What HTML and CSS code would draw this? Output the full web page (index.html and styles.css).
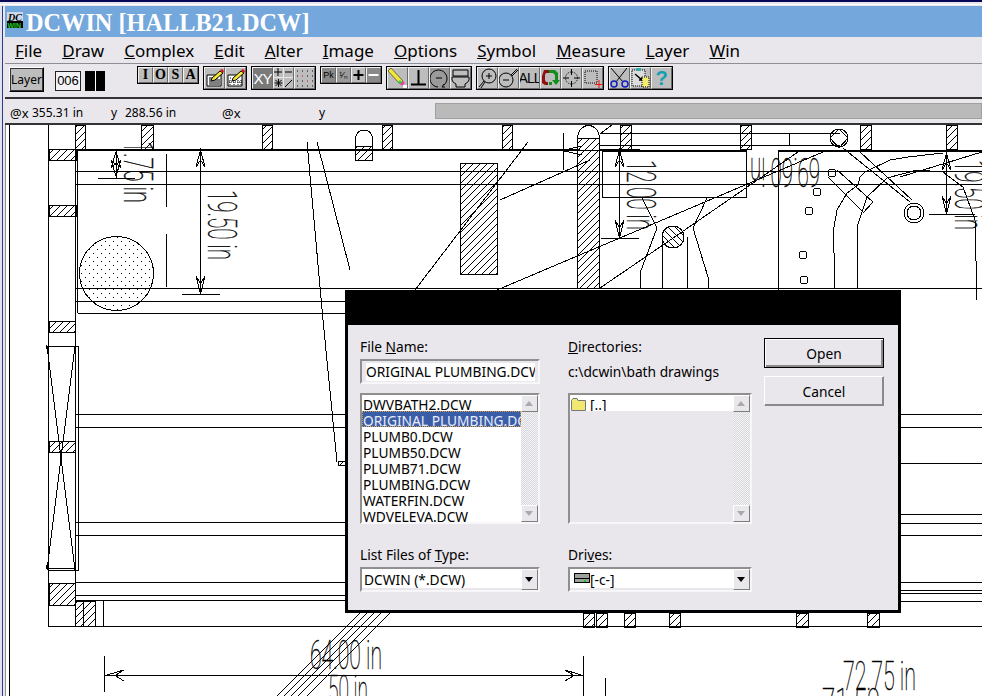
FILE: index.html
```html
<!DOCTYPE html>
<html lang="en">
<head>
<meta charset="utf-8">
<title>DCWIN [HALLB21.DCW]</title>
<link rel="stylesheet" href="styles.css">
</head>
<body>
<div class="app">
  <div class="topedge"></div>
  <div class="main">
    <div class="title">
      <svg class="appicon" viewBox="0 0 16 16" width="16" height="16"><rect width="16" height="16" fill="#cfd8e8"/><rect y="9" width="16" height="7" fill="#000"/><text x="1" y="9" class="ico-dc">DC</text><text x="0.5" y="15.500" class="ico-win">WIN</text></svg>
      <span>DCWIN [HALLB21.DCW]</span>
    </div>
    <nav class="menu">
      <span><u>F</u>ile</span><span><u>D</u>raw</span><span><u>C</u>omplex</span><span><u>E</u>dit</span><span><u>A</u>lter</span><span><u>I</u>mage</span><span><u>O</u>ptions</span><span><u>S</u>ymbol</span><span><u>M</u>easure</span><span><u>L</u>ayer</span><span><u>W</u>in</span>
    </nav>
    <div class="toolbar">
      <button class="layer">Layer</button>
      <div class="laybox">006</div>
      <div class="swatch"><i></i></div>
      <div class="grp mini iosa"><b>I</b><b>O</b><b>S</b><b>A</b></div>
      <div class="grp">
        <div class="tb"><svg viewBox="0 0 21 22"><path class="w" d="M3 8h14v11H3z"/><path class="k" d="M5 11h9M5 13h11M5 15h11M5 17h11"/><path class="yb" d="M8 11l8-7 3 2-8 7-4 1z"/><path class="r" d="M16 3l3 3 1-2-2-2z"/></svg></div>
        <div class="tb"><svg viewBox="0 0 21 22"><path class="w" d="M3 8h14v11H3z"/><path class="kd" d="M5 11h1M9 11h1M5 13v5M9 13v5M13 13v5M16 13v5M4 15h13"/><path class="yb" d="M8 11l8-7 3 2-8 7-4 1z"/><path class="r" d="M16 3l3 3 1-2-2-2z"/></svg></div>
      </div>
      <div class="grp">
        <div class="tb dark xy">XY</div>
        <div class="tb"><svg viewBox="0 0 21 22"><path class="k" d="M5 1v8M1 5h8M12 5h7M1.500 16h8M5.500 12v8M2.500 13l6 6M8.500 13l-6 6M12 20l7-7"/><path class="wl" d="M10.500 0v22M0 10.500h21"/></svg></div>
        <div class="tb"><svg viewBox="0 0 21 22"><path class="kd2" d="M3 4h1M8 4h1M13 4h1M18 4h1M3 9h1M13 9h1M18 9h1M3 14h1M8 14h1M18 14h1M3 19h1M8 19h1M13 19h1M18 19h1"/><path class="rd" d="M8 9h1M13 14h1"/></svg></div>
      </div>
      <div class="grp mini">
        <div class="tb dark2 pk">Pk</div>
        <div class="tb dark3 pk">¹⁄ₙ</div>
        <div class="tb sign"><svg viewBox="0 0 15 16"><path class="kb" d="M7.500 3v10M2.500 8h10"/></svg></div>
        <div class="tb dark2 sign"><svg viewBox="0 0 15 16"><path class="wb" d="M2.500 8h10"/></svg></div>
      </div>
      <div class="grp">
        <div class="tb"><svg viewBox="0 0 21 22"><path d="M1 4l3-3 12 13-3 3z" class="y"/><path d="M13 17l3-3 2 2-3 3z" class="pk1"/><path d="M11 15l2-2 2 2-2 2z" class="gn"/><rect x="16" y="18" width="5" height="3" fill="#fff"/></svg></div>
        <div class="tb"><svg viewBox="0 0 21 22"><path class="kb" d="M10.500 3v14M3 17.500h15"/></svg></div>
        <div class="tb dark3"><svg viewBox="0 0 21 22"><path class="k" d="M9 20a8.500 8.500 0 1 1 6-2M7 11h6M15 17l-2 3 3 0"/></svg></div>
        <div class="tb"><svg viewBox="0 0 21 22"><path class="k" d="M3 3h15v6H3zM2 10h17v3a8 6 0 0 1-4 4v3H6v-3a8 6 0 0 1-4-4z"/></svg></div>
      </div>
      <div class="grp">
        <div class="tb"><svg viewBox="0 0 21 22"><circle class="k" cx="12" cy="9" r="7"/><path class="k" d="M9 9h6M12 6v6M7 14l-5 6M8 15l-4 6"/></svg></div>
        <div class="tb"><svg viewBox="0 0 21 22"><circle class="k" cx="8" cy="13" r="7"/><path class="k" d="M5 13h6M13 8l6-6M14 9l6-6"/></svg></div>
        <div class="tb allb">ALL</div>
        <div class="tb"><svg viewBox="0 0 21 22"><path class="red" d="M9 3H4L2 9v7l3 2h3v-3H6l-1-2V8l1-2h3z"/><path class="grn" d="M9 3h6l3 3v7l2 0-4 5-4-5h3V8l-2-2H9zM9 15h3v3H9z"/></svg></div>
        <div class="tb"><svg viewBox="0 0 21 22"><circle class="kdash" cx="10.500" cy="11" r="6"/><path class="k" d="M10.500 2v6M10.500 14v6M2 11h6M13 11h6"/></svg></div>
        <div class="tb"><svg viewBox="0 0 21 22"><path class="kdash" d="M3 4h12v12H3z"/><path class="rl" d="M13 17.500h8M17 13v8"/></svg></div>
      </div>
      <div class="grp">
        <div class="tb"><svg viewBox="0 0 21 22"><path class="k" d="M2 1l12 14M18 1L7 15"/><circle class="bl" cx="5" cy="17" r="3"/><circle class="bl" cx="16" cy="17" r="3"/></svg></div>
        <div class="tb"><svg viewBox="0 0 21 22"><rect x="2" y="3" width="13" height="16" class="w2"/><rect x="6" y="1" width="5" height="3" fill="#3aa"/><path class="kb2" d="M5 7l7 6M9 13h3v-3"/><rect x="12" y="10" width="7" height="10" class="yy"/></svg></div>
        <div class="tb q">?</div>
      </div>
    </div>
    <div class="status">
      <span class="s1">@x</span><span class="s2">355.31 in</span><span class="s3">y</span><span class="s4">288.56 in</span><span class="s5">@x</span><span class="s6">y</span><div class="sbar"></div>
    </div>
    <div class="canvas">
      <svg class="drawing" viewBox="5 125 977 571" width="977" height="571">
        <defs>
          <pattern id="h" width="7" height="7" patternUnits="userSpaceOnUse"><path d="M0 7L7 0" stroke="#000" stroke-width="1"/></pattern>
          <pattern id="hb" width="7" height="7" patternUnits="userSpaceOnUse"><path d="M0 0L7 7" stroke="#000" stroke-width="1"/></pattern>
          <pattern id="d" width="8" height="8" patternUnits="userSpaceOnUse"><rect x="1" y="1" width="1" height="1"/><rect x="5" y="5" width="1" height="1"/></pattern>
        </defs>
        <g class="hatch">
          <rect x="75.500" y="125" width="10" height="24"/><rect x="141.500" y="125" width="12" height="24"/><rect x="262.500" y="125" width="10" height="24"/><rect x="382.500" y="125" width="10" height="24"/><rect x="502.500" y="125" width="10" height="24"/><rect x="620.500" y="125" width="11" height="24"/><rect x="740.500" y="125" width="11" height="24"/><rect x="860.500" y="125" width="11" height="24"/><rect x="946.500" y="125" width="11" height="24"/>
          <rect x="49.500" y="149.500" width="27" height="11"/><rect x="49.500" y="205.500" width="27" height="11"/><rect x="49.500" y="321.500" width="26" height="11"/><rect x="49.500" y="441.500" width="26" height="11"/><rect x="49.500" y="583.500" width="26" height="22"/>
          <rect x="75.500" y="601.500" width="8" height="25"/><rect x="83.500" y="601.500" width="12" height="25"/>
          <rect x="460.500" y="163.500" width="37" height="111"/>
          <rect x="577.500" y="138.500" width="22" height="150"/>
          <rect x="583.500" y="613" width="11" height="14"/><rect x="596.500" y="613" width="11" height="14"/><rect x="624.500" y="613" width="11" height="14"/><rect x="669.500" y="613" width="11" height="14"/><rect x="796.500" y="613" width="12" height="14"/><rect x="867.500" y="613" width="12" height="14"/>
          <rect x="338.500" y="461.500" width="7" height="4"/>
          <rect x="355.500" y="146.500" width="17" height="14"/>
        </g>
        <circle class="dots" cx="116.500" cy="273.500" r="37"/>
        <circle class="hb" cx="673" cy="237" r="11"/>
        <path class="ln" d="M9.500 125V696M48.500 125V626M75.500 125V626"/>
        <path class="thick" d="M76 150H580M600 150H640M602 151H747M778 151H982"/>
        <path class="ln" d="M76 171.500H982M76 184.500H982M77.500 150V313M77.500 313.500H345M76 288.500H982M76 301.500H345M600 133.500H840M600 145.500H840M789.500 133V145M602.500 150V197.500H746.500V150"/>
        <path class="ln" d="M75 414.500H345M75 427.500H345M75 522.500H345M75 535.500H345M75 582.500H345M75 595.500H345M75 600.500H345M48 626.500H982M103.500 601V626M901 414.500H982M901 427.500H982M901 463.500H982M901 514.500H982M901 523.500H982M901 535.500H982M901 582.500H982M901 590.500H982M901 593.500H982M901 601.500H982"/>
        <path class="ln" d="M48.500 346.500H78.500V570.500H48.500M47 346L75 570M75 346L47 570M46.500 345V349M46.500 565V568H75"/>
        <path class="ln" d="M307 142L323 320L337 462M317 142L350 270M415 290L528 142M500 200L590 160M563.500 133V170M560 150.500H600M562 150.500L582 146M562 150.500L582 155"/>
        <path class="ln" d="M166.500 154V207M166.500 234V287M200.500 150V294M182 294.500H220M116.500 150V178M98 178.500H135M619.500 150V238M601 238.500H639M778.500 150V290M946.500 150V214M929 214.500H975M687.500 237V288M662.500 237V288"/>
        <path class="ln" d="M116 152L111 168L116 163L121 168ZM116 176L111 160L116 165L121 160ZM200.500 150L196 167L200.500 160L205 167ZM200.500 294L196 276L200.500 284L205 276ZM619.500 150L615 167L619.500 160L624 167ZM619.500 238L615 220L619.500 228L624 220ZM946.500 153L942 170L946.500 163L951 170ZM946.500 214L942 196L946.500 204L951 196Z"/>
        <path class="ln" d="M497 290L823 152M600 288L663 245L798 152M640 288V273L657 228L642 198M708 288V277L693 228L707 198M835 288L834 253L833 233L837 210L847 193L858 185L860 177L865 172L890 160L908 157L943 153M857 288V227L867 197L887 178L917 170L943 172L963 187L975 220L977 300M843 148L910 202M860 152L912 200M828 177L864 213M837 170L873 202L863 213M900 177L982 152M600 134L612 125"/>
        <path class="ln" d="M577.500 138.500A11 13 0 0 1 599.500 138.500M355.500 146.500V138A8.500 8 0 0 1 372.500 138V146.500"/>
        <path class="ln" d="M839 129L848 138L839 148L830 138Z"/>
        <circle class="ln" cx="839" cy="138" r="9"/><circle class="ln" cx="832" cy="173" r="4"/><circle class="ln" cx="817" cy="192" r="4"/><circle class="ln" cx="809" cy="211" r="4"/><circle class="ln" cx="803" cy="255" r="4"/><circle class="ln" cx="804" cy="280" r="4"/><circle class="ln" cx="914" cy="213" r="10"/><circle class="ln" cx="914" cy="213" r="7"/>
        <path class="ln" d="M360 613L277 696M367 613L284 696M374 613L291 696M381 613L298 696M390 613L307 696"/>
        <path class="ln" d="M104.500 656V692M583.500 656V696M605.500 678V696M105 675.500H583M105 675.500L124 670L115 675.500L124 681M583 675.500L565 670L574 675.500L565 681"/>
        <g class="dt">
          <text transform="translate(208,190) rotate(90)" textLength="70" lengthAdjust="spacingAndGlyphs">19.50 in</text>
          <text transform="translate(124,141) rotate(90)" textLength="62" lengthAdjust="spacingAndGlyphs">1.75 in</text>
          <text transform="translate(627,160) rotate(90)" textLength="70" lengthAdjust="spacingAndGlyphs">12.00 in</text>
          <text transform="translate(955,160) rotate(90)" textLength="70" lengthAdjust="spacingAndGlyphs">19.50 in</text>
          <text transform="translate(820,158) rotate(180)" textLength="70" lengthAdjust="spacingAndGlyphs">69.60 in</text>
          <text x="310" y="669" textLength="72" lengthAdjust="spacingAndGlyphs">64.00 in</text>
          <text x="328" y="704" textLength="40" lengthAdjust="spacingAndGlyphs">50 in</text>
          <text x="843" y="690" textLength="73" lengthAdjust="spacingAndGlyphs">72.75 in</text>
          <text x="822" y="717" textLength="58" lengthAdjust="spacingAndGlyphs">71.50</text>
        </g>
      </svg>
      <div class="dialog">
        <div class="dlg-title"></div>
        <div class="dlg-body">
          <div class="col">
            <label class="lbl">File <u>N</u>ame:</label>
            <div class="input"><span>ORIGINAL PLUMBING.DCW</span></div>
            <div class="list">
              <ul class="rows">
                <li>DWVBATH2.DCW</li>
                <li class="sel">ORIGINAL PLUMBING.DCW</li>
                <li>PLUMB0.DCW</li>
                <li>PLUMB50.DCW</li>
                <li>PLUMB71.DCW</li>
                <li>PLUMBING.DCW</li>
                <li>WATERFIN.DCW</li>
                <li>WDVELEVA.DCW</li>
              </ul>
              <div class="scroll"><div class="sb up"></div><div class="sb down"></div></div>
            </div>
            <label class="lbl lbl2">List Files of <u>T</u>ype:</label>
            <div class="combo"><span>DCWIN (*.DCW)</span><div class="drop"></div></div>
          </div>
          <div class="col col2">
            <label class="lbl"><u>D</u>irectories:</label>
            <div class="path">c:\dcwin\bath drawings</div>
            <div class="list dirs">
              <ul class="rows">
                <li class="dir"><svg viewBox="0 0 15 13" width="15" height="13"><path class="fold" d="M0.500 2.500L2 0.500H6L7 2.500H14.500V12.500H0.500Z"/></svg><span>[..]</span></li>
              </ul>
              <div class="scroll"><div class="sb up"></div><div class="sb down"></div></div>
            </div>
            <label class="lbl lbl2">Dri<u>v</u>es:</label>
            <div class="combo"><svg class="drive" viewBox="0 0 16 10" width="16" height="10"><rect x="0.500" y="0.500" width="15" height="9" fill="#9aa49c" stroke="#000"/><path d="M0 5.500H16" stroke="#000"/><rect x="10" y="7" width="2" height="2" fill="#1c1"/></svg><span>[-c-]</span><div class="drop"></div></div>
          </div>
          <div class="col col3">
            <button class="btn def">Open</button>
            <button class="btn">Cancel</button>
          </div>
        </div>
      </div>
    </div>
  </div>
</div>
</body>
</html>
```

FILE: styles.css
```css
* { box-sizing: border-box; }
html, body { margin: 0; padding: 0; width: 982px; height: 696px; overflow: hidden; background: #e9e7ec; }
body { font-family: "Noto Sans", sans-serif; color: #000; }
.app { width: 982px; height: 696px; display: flex; flex-direction: column; overflow: hidden; }
.topedge { height: 6px; flex: none; background: linear-gradient(#07075a 0, #07075a 2px, #e9e7ec 2px, #e9e7ec 4px, #fff 4px, #fff 5px, #e9e7ec 5px); }
.main { flex: 1; min-height: 0; display: flex; flex-direction: column; padding-left: 5px; background: linear-gradient(90deg, #e3e3ef 0, #e3e3ef 2px, #2a3a8c 2px, #2a3a8c 3px, #e9e7ec 3px) left / 5px 100% no-repeat #e9e7ec; }

.title { height: 31px; flex: none; background: #74a7dc; display: flex; align-items: center; gap: 3px; padding: 3px 0 0 2px; color: #fff; font: bold 24.300px/28px "Liberation Serif", serif; white-space: nowrap; }
.appicon { flex: none; margin-top: -6px; }
.ico-dc { font: italic bold 10px "Liberation Serif", serif; fill: #000; }
.ico-win { font: bold 7px "Liberation Sans", sans-serif; fill: #2c2; }

.menu { height: 27px; flex: none; display: flex; gap: 20px; padding: 2px 0 0 10px; align-items: center; font-size: 17px; line-height: 24px; border-bottom: 1px solid #8e8e96; }

.toolbar { height: 33px; flex: none; display: flex; align-items: flex-start; padding: 2px 0 0 4px; gap: 4px; }
.layer { width: 35px; height: 25px; margin: 1px 0 0; padding: 0; background: #bdbdbd; border: 1px solid; border-color: #fff #000 #000 #fff; box-shadow: 0 0 0 1px #333 inset; font: 12px "Noto Sans", sans-serif; color: #000; }
.laybox { width: 26px; height: 20px; margin: 5px 0 0 7px; border: 1px solid #222; background: #f3f2f5; font: 13px/18px "Liberation Sans", sans-serif; text-align: center; }
.swatch { width: 20px; height: 20px; margin-top: 5px; background: #000; position: relative; display: flex; justify-content: center; }
.swatch i { width: 1px; background: #fff; }
.iosa { margin-left: 28px; }
.grp { display: flex; border: 1px solid #000; flex: none; background: #000; }
.tb { width: 21px; height: 22px; background: #bdbdbd; border: 1px solid; border-color: #f0f0f0 #6a6a6a #6a6a6a #f0f0f0; display: flex; align-items: center; justify-content: center; overflow: hidden; }
.tb svg { width: 21px; height: 22px; flex: none; display: block; }
.mini .tb { width: 15px; height: 16px; }
.mini .tb svg { width: 15px; height: 16px; }
.iosa b { width: 15px; height: 16px; background: #bdbdbd; border: 1px solid; border-color: #f0f0f0 #6a6a6a #6a6a6a #f0f0f0; font: bold 14px/14px "Liberation Serif", serif; text-align: center; }
.dark { background: #7a7a7a; }
.dark2 { background: #8a8a8a; }
.dark3 { background: #9a9a9a; }
.xy { color: #fff; font: 15px "Liberation Sans", sans-serif; letter-spacing: -1px; }
.pk { font: 9px/14px "Liberation Sans", sans-serif; color: #000; }
.allb { font: 14px "Liberation Sans", sans-serif; letter-spacing: -1px; }
.q { font: bold 20px "Liberation Sans", sans-serif; color: #10a0b0; }
.k { stroke: #000; fill: none; stroke-width: 1; }
.kd { stroke: #000; fill: none; stroke-width: 1; stroke-dasharray: 1 1; }
.kd2 { stroke: #000; fill: none; stroke-width: 1; }
.rd { stroke: #c01010; fill: none; }
.kb { stroke: #000; fill: none; stroke-width: 2; }
.kb2 { stroke: #000; fill: none; stroke-width: 1.500; }
.wb { stroke: #fff; fill: none; stroke-width: 2; }
.wl { stroke: #e8e8e8; fill: none; }
.w { fill: #fff; stroke: #000; }
.w2 { fill: #dcdcdc; stroke: #000; stroke-dasharray: 1 1; }
.yb { fill: #f3e63a; stroke: #000; }
.r { fill: #e01010; }
.y { fill: #f3e63a; stroke: #000; stroke-width: 0.500; }
.pk1 { fill: #f040a0; }
.gn { fill: #30d050; }
.red { fill: #901010; }
.grn { fill: #10901a; }
.kdash { stroke: #000; fill: none; stroke-dasharray: 1 1; }
.rl { stroke: #f01010; fill: none; }
.bl { stroke: #1020c0; fill: none; stroke-width: 1.500; }
.yy { fill: #f3ec70; stroke: #000; stroke-dasharray: 1 1; }

.status { height: 28px; flex: none; display: flex; align-items: center; padding: 3px 0 0 5px; font-size: 12px; line-height: 16px; border-top: 2px solid #333; border-bottom: 2px solid #333; }
.s1 { width: 22px; font-size: 13px; } .s2 { width: 79px; } .s3 { width: 14px; } .s4 { width: 97px; } .s5 { width: 97px; font-size: 13px; } .s6 { width: 116px; }
.sbar { flex: 1; height: 16px; margin-top: -3px; background: #bababa; border: 1px solid #a0a0a0; }

.canvas { flex: 1; min-height: 0; position: relative; background: #fff; overflow: hidden; border-left: 1px solid #8e8e96; }
.drawing { display: block; margin-left: -1px; shape-rendering: crispEdges; }
.ln { stroke: #000; fill: none; stroke-width: 1; }
.thick { stroke: #000; fill: none; stroke-width: 2; }
.hatch rect { fill: url(#h); stroke: #000; stroke-width: 1; }
.dots { fill: url(#d); stroke: #000; stroke-width: 1; }
.hb { fill: url(#hb); stroke: #000; stroke-width: 1; }
.dt text { font-family: Roboto, sans-serif; font-weight: 100; font-size: 40px; fill: #000; stroke: #000; stroke-width: 0.400; }

.dialog { position: absolute; left: 339px; top: 165px; width: 556px; height: 323px; border: 3px solid #000; background: #e9e7ec; display: flex; flex-direction: column; font-size: 13.750px; }
.dlg-title { height: 32px; flex: none; background: #000; }
.dlg-body { flex: 1; display: flex; padding: 11px 0 0 12px; }
.col { display: flex; flex-direction: column; width: 180px; flex: none; }
.col2 { width: 184px; margin-left: 28px; }
.col3 { width: 120px; margin-left: 12px; gap: 8px; padding-top: 2px; }
.lbl { height: 23px; line-height: 22px; flex: none; }
.lbl2 { margin-top: 20px; }
.input { height: 25px; flex: none; border: 2px solid; border-color: #8f8f8f #f7f7f9 #f7f7f9 #8f8f8f; padding: 2px 3px 0 4px; overflow: hidden; white-space: nowrap; line-height: 17px; }
.input span { display: block; background: #fff; overflow: hidden; height: 18px; }
.path { height: 25px; flex: none; line-height: 26px; }
.list { height: 131px; margin-top: 9px; flex: none; display: flex; border: 2px solid; border-color: #8f8f8f #f7f7f9 #f7f7f9 #8f8f8f; overflow: hidden; }
.path + .list { margin-top: 9px; }
.rows { flex: 1; min-width: 0; list-style: none; margin: 0; padding: 0; background: #fff; overflow: hidden; white-space: nowrap; }
.rows li { height: 16px; line-height: 19px; padding-left: 1px; overflow: hidden; }
.rows .sel { background: #3a5da8; color: #e8ecf8; outline: 1px dotted #d8a040; outline-offset: -1px; }
.dirs .rows { background: linear-gradient(#fff 16px, #e9e7ec 16px); }
.rows .dir { display: flex; gap: 4px; padding-left: 1px; align-items: flex-start; }
.dir svg { margin-top: 3px; flex: none; }
.dir span { height: 16px; overflow: hidden; line-height: 20px; }
.fold { fill: #f0e870; stroke: #777; }
.scroll { width: 17px; flex: none; display: flex; flex-direction: column; justify-content: space-between; background: repeating-conic-gradient(#d8d8dc 0 25%, #f4f4f6 0 50%) 0 0 / 2px 2px; }
.sb { height: 17px; background: #e9e7ec; border: 1px solid; border-color: #fff #7d7d7d #7d7d7d #fff; position: relative; }
.sb::after { content: ""; position: absolute; left: 3px; border: 4px solid transparent; }
.up::after { border-top-width: 0; border-bottom: 5px solid #aaa; top: 5px; }
.down::after { border-bottom-width: 0; border-top: 5px solid #aaa; top: 5px; }
.combo { height: 25px; flex: none; display: flex; align-items: center; border: 2px solid; border-color: #8f8f8f #f7f7f9 #f7f7f9 #8f8f8f; background: #fff; padding-left: 2px; line-height: 20px; gap: 2px; box-shadow: inset 0 -2px 0 #e9e7ec; }
.combo span { flex: 1; }
.drive { margin: -3px -2px 0 2px; flex: none; }
.drop { width: 17px; height: 21px; flex: none; background: #e9e7ec; border: 1px solid; border-color: #fff #7d7d7d #7d7d7d #fff; position: relative; }
.drop::after { content: ""; position: absolute; left: 3px; top: 7px; border: 4px solid transparent; border-bottom-width: 0; border-top: 5px solid #000; }
.btn { width: 120px; height: 30px; padding: 0; font: 13.750px "Noto Sans", sans-serif; color: #000; background: #e9e7ec; border: 1px solid; border-color: #fff #8a8a8a #8a8a8a #fff; box-shadow: inset -1px -1px 0 #8a8a8a; }
.def { border-color: #000; box-shadow: inset 1px 1px 0 #fff, inset -2px -2px 0 #8a8a8a; }
```
